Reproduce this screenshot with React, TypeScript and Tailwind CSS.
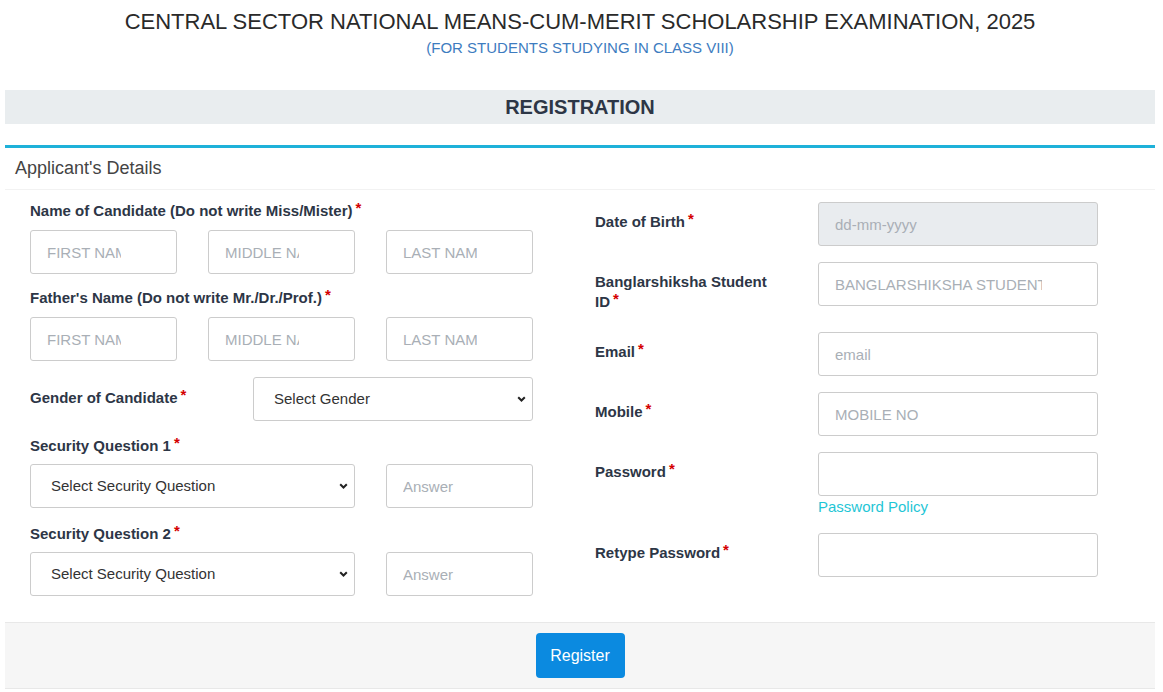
import React from "react";

const Req = () => (
  <span className="ml-[3px] relative -top-[3px] text-[15px] text-[#d40000]">*</span>
);

const inputCls =
  "h-[44px] w-full rounded-[3px] border border-[#cccccc] bg-white pl-4 pr-[55px] text-[15px] text-[#333] placeholder:text-[#a9afb6] outline-none";

const Chevron = () => (
  <svg
    className="pointer-events-none absolute right-[7px] top-1/2 -translate-y-1/2"
    width="9"
    height="6"
    viewBox="0 0 9 6"
  >
    <path d="M1.2 1.2 L4.5 4.5 L7.8 1.2" fill="none" stroke="#222" strokeWidth="2" />
  </svg>
);

const Select = ({ label, width }: { label: string; width: string }) => (
  <div className={`relative ${width}`}>
    <select className="h-[44px] w-full appearance-none rounded-[3px] border border-[#cccccc] bg-white pl-[20px] text-[15px] text-[#333] outline-none">
      <option>{label}</option>
    </select>
    <Chevron />
  </div>
);

const Label = ({ children }: { children: React.ReactNode }) => (
  <div className="text-[15px] font-bold leading-[20px] text-[#2d3646]">{children}</div>
);

const RightRow = ({
  label,
  children,
  extra,
}: {
  label: React.ReactNode;
  children: React.ReactNode;
  extra?: string;
}) => (
  <div className="flex items-start">
    <div className={`w-[223px] pt-[10px] ${extra ?? ""}`}>
      <Label>{label}</Label>
    </div>
    <div className="w-[280px]">{children}</div>
  </div>
);

export default function App() {
  return (
    <div
      className="min-h-[692px] bg-white pl-[5px] pr-[8px]"
      style={{ fontFamily: '"Liberation Sans", Arial, sans-serif' }}
    >
      {/* heading */}
      <div className="pt-[10px] text-center">
        <h1 className="text-[22px] leading-[24px] text-[#2a2a2a]">
          CENTRAL SECTOR NATIONAL MEANS-CUM-MERIT SCHOLARSHIP EXAMINATION, 2025
        </h1>
        <p className="mt-[4px] text-[15px] leading-[20px] text-[#3d7cc0]">
          (FOR STUDENTS STUDYING IN CLASS VIII)
        </p>
      </div>

      <div className="mt-[32px] flex h-[34px] items-center justify-center bg-[#e9edef]">
        <h2 className="text-[20px] font-bold text-[#2d3646]">REGISTRATION</h2>
      </div>

      {/* card */}
      <div className="mt-[21px] border-t-[3px] border-[#1eb1d9]">
        <div className="flex h-[42px] items-center border-b border-[#f2f2f2] px-[10px]">
          <span className="text-[18px] text-[#444]">Applicant's Details</span>
        </div>

        <div className="flex gap-[62px] pl-[25px] pt-[11px]">
          {/* left */}
          <div className="w-[503px]">
            <Label>
              Name of Candidate (Do not write Miss/Mister)
              <Req />
            </Label>
            <div className="mt-[9px] grid grid-cols-3 gap-[31px]">
              <input className={inputCls} placeholder="FIRST NAME" />
              <input className={inputCls} placeholder="MIDDLE NAME" />
              <input className={inputCls} placeholder="LAST NAME" />
            </div>

            <div className="mt-[14px]">
              <Label>
                Father's Name (Do not write Mr./Dr./Prof.)
                <Req />
              </Label>
            </div>
            <div className="mt-[9px] grid grid-cols-3 gap-[31px]">
              <input className={inputCls} placeholder="FIRST NAME" />
              <input className={inputCls} placeholder="MIDDLE NAME" />
              <input className={inputCls} placeholder="LAST NAME" />
            </div>

            <div className="mt-[16px] flex items-center">
              <div className="w-[223px] -mt-[3px]">
                <Label>
                  Gender of Candidate
                  <Req />
                </Label>
              </div>
              <Select label="Select Gender" width="w-[280px]" />
            </div>

            <div className="mt-[15px]">
              <Label>
                Security Question 1<Req />
              </Label>
            </div>
            <div className="mt-[8px] flex gap-[31px]">
              <Select label="Select Security Question" width="w-[325px]" />
              <input className={`${inputCls} !w-[147px]`} placeholder="Answer" />
            </div>

            <div className="mt-[16px]">
              <Label>
                Security Question 2<Req />
              </Label>
            </div>
            <div className="mt-[8px] flex gap-[31px]">
              <Select label="Select Security Question" width="w-[325px]" />
              <input className={`${inputCls} !w-[147px]`} placeholder="Answer" />
            </div>
          </div>

          {/* right */}
          <div className="flex w-[503px] flex-col gap-[16px] pt-[1px]">
            <RightRow
              label={
                <>
                  Date of Birth
                  <Req />
                </>
              }
            >
              <input
                className={`${inputCls} !bg-[#e9ecef] !pr-4`}
                placeholder="dd-mm-yyyy"
                readOnly
              />
            </RightRow>
            <RightRow
              extra="pb-[4px]"
              label={
                <>
                  Banglarshiksha Student
                  <br />
                  ID
                  <Req />
                </>
              }
            >
              <input className={inputCls} placeholder="BANGLARSHIKSHA STUDENT ID" />
            </RightRow>
            <RightRow
              label={
                <>
                  Email
                  <Req />
                </>
              }
            >
              <input className={inputCls} placeholder="email" />
            </RightRow>
            <RightRow
              label={
                <>
                  Mobile
                  <Req />
                </>
              }
            >
              <input className={inputCls} placeholder="MOBILE NO" />
            </RightRow>
            <RightRow
              label={
                <>
                  Password
                  <Req />
                </>
              }
            >
              <input className={inputCls} type="password" />
              <a className="block text-[15px] leading-[21px] text-[#1fc6d6]" href="#">
                Password Policy
              </a>
            </RightRow>
            <RightRow
              label={
                <>
                  Retype Password
                  <Req />
                </>
              }
            >
              <input className={inputCls} type="password" />
            </RightRow>
          </div>
        </div>

        <div className="mt-[26px] flex h-[67px] items-center justify-center border-y border-[#e8e8e8] bg-[#f6f6f6]">
          <button className="h-[45px] w-[89px] rounded-[4px] bg-[#0b8ae0] text-[16px] text-white">
            Register
          </button>
        </div>
      </div>
    </div>
  );
}
